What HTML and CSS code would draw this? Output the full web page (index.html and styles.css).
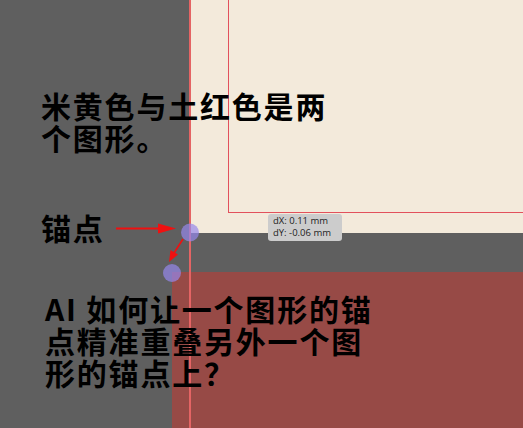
FILE: index.html
```html
<!DOCTYPE html>
<html lang="zh">
<head>
<meta charset="utf-8">
<link rel="stylesheet" href="styles.css">
</head>
<body>
<div class="stage">
  <div class="beige"><div class="inner-rect"></div></div>
  <div class="red-shape"></div>
  <div class="guide-v"></div>
  <svg class="arrows" width="523" height="428" viewBox="0 0 523 428">
    <line x1="116" y1="228.5" x2="162" y2="228.5" stroke="#f01010" stroke-width="2"/>
    <polygon points="176,228.5 158,223.5 158,233.5" fill="#f01010"/>
    <line x1="183" y1="239" x2="174" y2="253" stroke="#f01010" stroke-width="1.6"/>
    <polygon points="169,262 170.5,250 178,254.5" fill="#f01010"/>
    <circle cx="190" cy="232.5" r="9" fill="rgba(150,135,235,0.7)"/>
    <circle cx="172" cy="273" r="9" fill="rgba(150,135,235,0.7)"/>
  </svg>
  <div class="tooltip">
    <div>dX: 0.11 mm</div>
    <div>dY: -0.06 mm</div>
  </div>
  <p class="caption caption-top">米黄色与土红色是两<br>个图形。</p>
  <p class="caption caption-anchor">锚点</p>
  <p class="caption caption-bottom">AI 如何让一个图形的锚<br>点精准重叠另外一个图<br>形的锚点上？</p>
</div>
</body>
</html>
```

FILE: styles.css
```css
html, body {
  margin: 0;
  padding: 0;
}
body {
  background: #5f5f5f;
  font-family: "Noto Sans CJK SC", "Noto Sans", sans-serif;
}
.stage {
  position: relative;
  width: 523px;
  height: 428px;
  overflow: hidden;
  background: #5f5f5f;
}
.beige {
  position: absolute;
  left: 191px;
  top: 0;
  width: 332px;
  height: 233px;
  background: #f3eadb;
}
.inner-rect {
  position: absolute;
  left: 37px;
  top: -2px;
  right: -2px;
  height: 213px;
  border: 1px solid #e2515c;
}
.red-shape {
  position: absolute;
  left: 172px;
  top: 272px;
  width: 351px;
  height: 156px;
  background: #974a46;
}
.guide-v {
  position: absolute;
  left: 189px;
  top: 0;
  width: 2px;
  height: 428px;
  background: #e46464;
}
.arrows {
  position: absolute;
  left: 0;
  top: 0;
}
.tooltip {
  position: absolute;
  left: 268px;
  top: 214px;
  width: 74px;
  height: 27px;
  box-sizing: border-box;
  padding: 1px 0 0 5px;
  border-radius: 3px;
  background: #cccccc;
  color: #1e1e1e;
  font-family: "Open Sans", "Noto Sans", sans-serif;
  font-size: 9.5px;
  line-height: 12px;
}
.caption {
  position: absolute;
  margin: 0;
  color: #000;
  font-weight: bold;
  font-size: 30px;
  line-height: 32px;
  letter-spacing: 1.8px;
  white-space: nowrap;
}
.caption-top {
  left: 41px;
  top: 89px;
}
.caption-anchor {
  left: 41px;
  top: 211px;
}
.caption-bottom {
  left: 45px;
  top: 292px;
  line-height: 32px;
}
```
